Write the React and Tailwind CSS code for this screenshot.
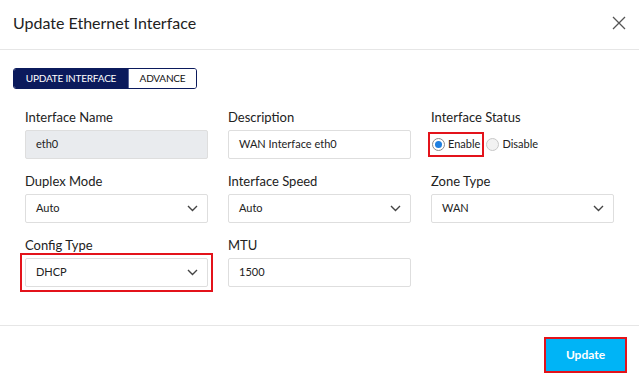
const font = { fontFamily: 'Lato, "Open Sans", sans-serif' }

function Chevron() {
    return (
        <svg width="11" height="7" viewBox="0 0 11 7" fill="none" className="shrink-0">
            <path d="M1 1l4.5 4.5L10 1" stroke="#444" strokeWidth="1.4" />
        </svg>
    )
}

function Field({ label, children }) {
    return (
        <div className="flex flex-col">
            <div className="h-5 text-[13px] leading-5 text-[#222]">{label}</div>
            <div className="mt-[3px]">{children}</div>
        </div>
    )
}

function TextBox({ value, disabled }) {
    return (
        <div
            className={`h-[29px] flex items-center px-[10px] rounded-[2px] border border-[#dedede] text-[11px] text-[#222] ${
                disabled ? 'bg-[#e9ebee]' : 'bg-white'
            }`}
        >
            {value}
        </div>
    )
}

function Select({ value }) {
    return (
        <div className="h-[29px] flex items-center justify-between pl-[10px] pr-[9px] rounded-[2px] border border-[#dedede] bg-white text-[11px] text-[#222]">
            <span>{value}</span>
            <Chevron />
        </div>
    )
}

function Radio({ checked, label }) {
    return (
        <div className="flex items-center gap-[3px]">
            <span
                className={`w-[13px] h-[13px] rounded-full border flex items-center justify-center ${
                    checked ? 'border-[#8a8a8a] bg-white' : 'border-[#c8c8c8] bg-[#f2f2f2]'
                }`}
            >
                {checked && <span className="w-[7px] h-[7px] rounded-full bg-[#1e7fe0]" />}
            </span>
            <span className="text-[11px] text-[#222]">{label}</span>
        </div>
    )
}

export default function App() {
    return (
        <div className="w-[639px] h-[381px] bg-white flex flex-col" style={font}>
            <div className="h-[50px] shrink-0 flex items-center justify-between pl-[13px] pr-[13px] border-b border-[#e6e6e6]">
                <h1 className="text-[16px] text-[#222] mt-[-3px]">Update Ethernet Interface</h1>
                <svg width="14" height="14" viewBox="0 0 14 14" className="mt-[-3px]">
                    <path d="M1 1l12 12M13 1L1 13" stroke="#555" strokeWidth="1.3" />
                </svg>
            </div>

            <div className="flex-1 pl-[13px] pt-[18px]">
                <div className="flex w-[184px] h-[21px] rounded-[3px] border border-[#0b1a5c] overflow-hidden text-[10px] tracking-[-0.2px]">
                    <div className="w-[114px] bg-[#0b1a5c] text-white flex items-center justify-center">UPDATE INTERFACE</div>
                    <div className="flex-1 bg-white text-[#111] flex items-center justify-center border-l border-[#5a6599]">ADVANCE</div>
                </div>

                <div className="mt-[18px] ml-3 w-[589px] grid grid-cols-3 gap-x-5 gap-y-3">
                    <Field label="Interface Name">
                        <TextBox value="eth0" disabled />
                    </Field>
                    <Field label="Description">
                        <TextBox value="WAN Interface eth0" />
                    </Field>
                    <Field label="Interface Status">
                        <div className="h-[29px] flex items-center gap-[2px] -ml-[3px]">
                            <div className="h-[25px] px-[2px] flex items-center border-2 border-[#e3131b]">
                                <Radio checked label="Enable" />
                            </div>
                            <Radio label="Disable" />
                        </div>
                    </Field>

                    <Field label="Duplex Mode">
                        <Select value="Auto" />
                    </Field>
                    <Field label="Interface Speed">
                        <Select value="Auto" />
                    </Field>
                    <Field label="Zone Type">
                        <Select value="WAN" />
                    </Field>

                    <Field label="Config Type">
                        <div className="outline-2 outline-offset-[3px] outline-[#e3131b]">
                            <Select value="DHCP" />
                        </div>
                    </Field>
                    <Field label="MTU">
                        <TextBox value="1500" />
                    </Field>
                </div>
            </div>

            <div className="h-[56px] shrink-0 border-t border-[#e6e6e6] flex items-start justify-end pr-3 pt-[11px]">
                <div className="border-2 border-[#e3131b]">
                    <button className="w-[79px] h-[32px] bg-[#00b4f6] text-white text-[12px] font-bold">Update</button>
                </div>
            </div>
        </div>
    )
}
